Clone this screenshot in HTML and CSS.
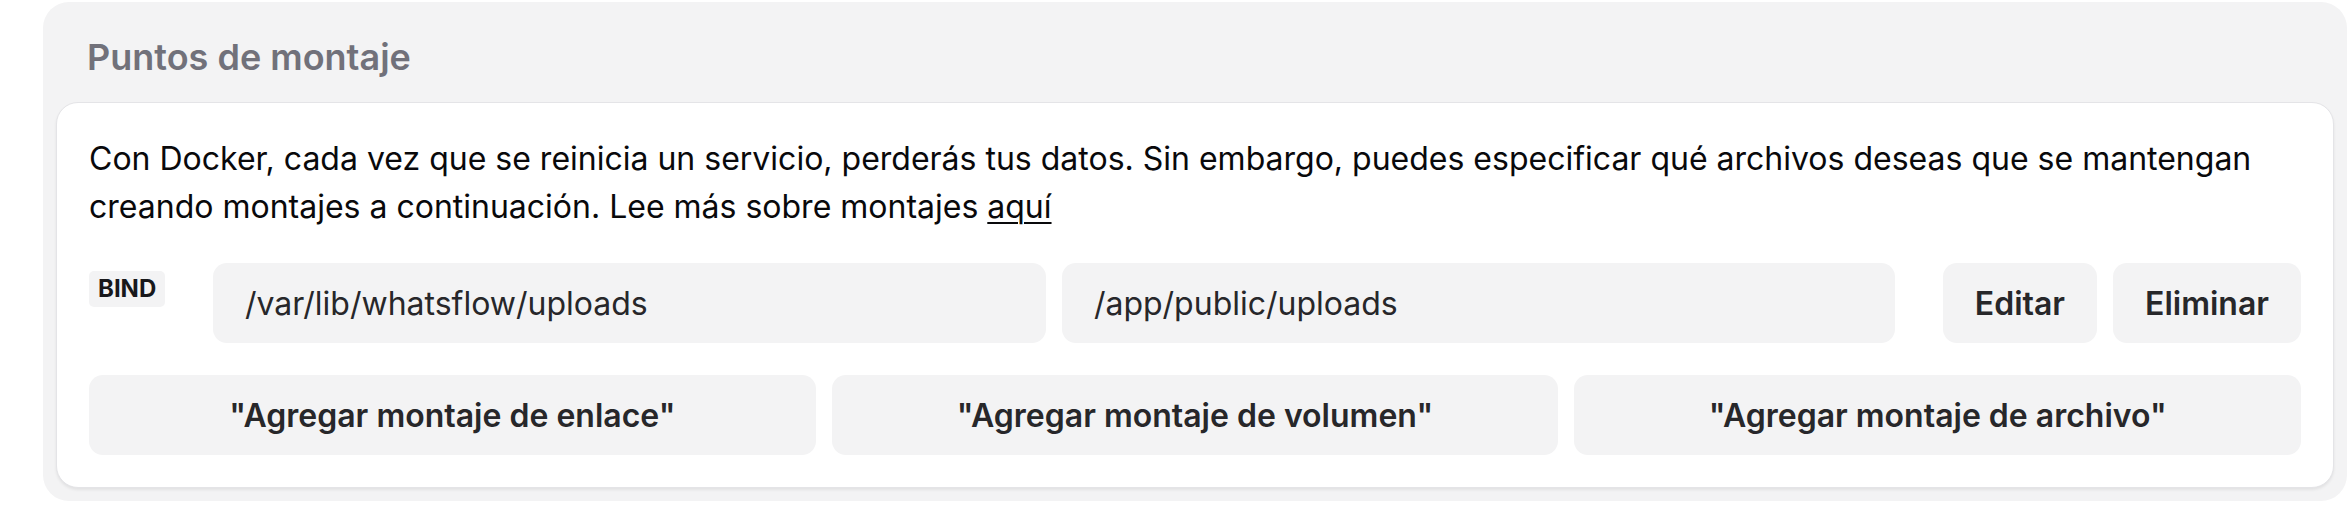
FILE: index.html
```html
<!DOCTYPE html>
<html lang="es">
<head>
<meta charset="utf-8">
<title>Puntos de montaje</title>
<link rel="stylesheet" href="styles.css">
</head>
<body>
<div class="page">
  <section class="panel">
    <h2 class="panel-title">Puntos de montaje</h2>
    <div class="card">
      <p class="desc">Con Docker, cada vez que se reinicia un servicio, perderás tus datos. Sin embargo, puedes especificar qué archivos deseas que se mantengan creando montajes a continuación. Lee más sobre montajes <a class="link" href="#">aquí</a></p>
      <div class="mount-row">
        <div class="badge-cell"><span class="badge">BIND</span></div>
        <input class="field" type="text" value="/var/lib/whatsflow/uploads" readonly>
        <input class="field" type="text" value="/app/public/uploads" readonly>
        <div class="actions">
          <button class="btn">Editar</button>
          <button class="btn">Eliminar</button>
        </div>
      </div>
      <div class="add-row">
        <button class="btn btn-wide">"Agregar montaje de enlace"</button>
        <button class="btn btn-wide">"Agregar montaje de volumen"</button>
        <button class="btn btn-wide">"Agregar montaje de archivo"</button>
      </div>
    </div>
  </section>
</div>
</body>
</html>
```

FILE: styles.css
```css
* { box-sizing: border-box; }

html, body {
  margin: 0;
  padding: 0;
  background: #ffffff;
}

body {
  font-family: Inter, "Noto Sans", "Liberation Sans", sans-serif;
  color: #09090b;
}

.page {
  padding: 2px 5px 8px 43px;
}

.panel {
  background: #f3f3f4;
  border-radius: 26px;
  padding: 0 13px 13px 13px;
}

.panel-title {
  margin: 0;
  padding: 34px 32px 24px 31px;
  font-size: 36px;
  line-height: 42px;
  font-weight: 600;
  color: #71717a;
}

.card {
  background: #ffffff;
  border: 1px solid #e4e4e7;
  border-radius: 22px;
  box-shadow: 0 2px 3px rgba(0, 0, 0, 0.07);
  padding: 32px;
  display: flex;
  flex-direction: column;
  gap: 32px;
}

.desc {
  margin: 0;
  font-size: 32px;
  line-height: 48px;
  color: #09090b;
}

.link {
  color: #09090b;
  text-decoration: underline;
  text-underline-offset: 4px;
  text-decoration-thickness: 2px;
}

.mount-row {
  display: flex;
  align-items: flex-start;
  gap: 16px;
}

.badge-cell {
  flex: none;
  width: 108px;
  padding-top: 8px;
}

.badge {
  display: inline-block;
  background: #f3f3f4;
  border-radius: 5px;
  padding: 0 9px;
  font-size: 24px;
  line-height: 36px;
  font-weight: 700;
  color: #18181b;
}

.field {
  flex: 1 1 0;
  min-width: 0;
  height: 80px;
  border: none;
  outline: none;
  background: #f3f3f4;
  border-radius: 14px;
  padding: 0 32px;
  font-family: inherit;
  font-size: 32px;
  color: #27272a;
}

.actions {
  flex: none;
  display: flex;
  gap: 16px;
  margin-left: 32px;
}

.btn {
  height: 80px;
  border: none;
  background: #f3f3f4;
  border-radius: 14px;
  padding: 0 32px;
  font-family: inherit;
  font-size: 32px;
  font-weight: 600;
  color: #27272a;
  cursor: pointer;
}

.add-row {
  display: grid;
  grid-template-columns: repeat(3, 1fr);
  gap: 16px;
}

.btn-wide {
  width: 100%;
}
```
